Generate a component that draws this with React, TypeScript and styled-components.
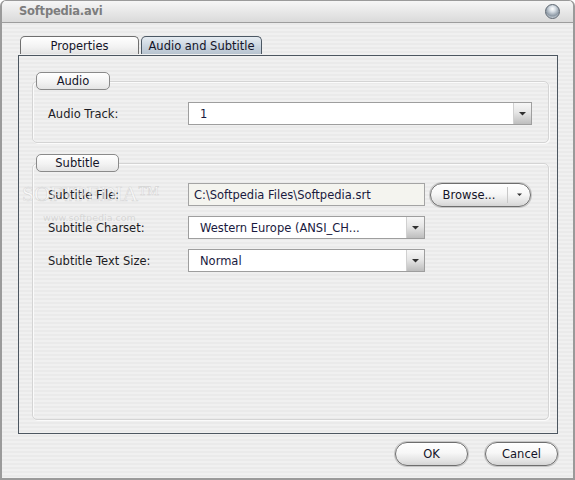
import styled, { createGlobalStyle } from "styled-components";

const GlobalStyle = createGlobalStyle`
  html, body {
    margin: 0;
    padding: 0;
    background: #ffffff;
  }
  body {
    font-family: "DejaVu Sans", "Liberation Sans", sans-serif;
    font-size: 11px;
    color: #1c1c24;
  }
`;

const stripes = `repeating-linear-gradient(
  to bottom,
  #f0f0f0 0px,
  #f0f0f0 2px,
  #eaeaea 2px,
  #eaeaea 4px
)`;

const Window = styled.div`
  box-sizing: border-box;
  width: 575px;
  height: 480px;
  display: flex;
  flex-direction: column;
  border: 2px solid #9a9a9a;
  border-top-width: 1px;
  border-radius: 6px 6px 0 0;
  background: ${stripes};
  overflow: hidden;
`;

const TitleBar = styled.div`
  box-sizing: border-box;
  height: 22px;
  flex: 0 0 22px;
  display: flex;
  align-items: center;
  justify-content: space-between;
  padding: 0 13px 1px 17px;
  background: linear-gradient(to bottom, #f6f6f6, #dadada);
  border-bottom: 1px solid #9d9d9d;
`;

const Title = styled.span`
  font-family: "DejaVu Sans", sans-serif;
  font-weight: bold;
  font-size: 11.5px;
  color: #7d7d7d;
  letter-spacing: -0.2px;
`;

const CloseOrb = styled.span`
  width: 13px;
  height: 13px;
  border-radius: 50%;
  border: 1px solid #5d6670;
  background: radial-gradient(
    circle at 50% 30%,
    #ffffff 0px,
    #d6dde4 3px,
    #8d99a5 7px,
    #c9d1d8 9px
  );
`;

const Body = styled.div`
  flex: 1;
  display: flex;
  flex-direction: column;
  padding: 13px 15px 12px 16px;
  position: relative;
`;

const TabStrip = styled.div`
  display: flex;
  gap: 2px;
  padding-left: 2px;
  height: 18px;
`;

const Tab = styled.div<{ $active?: boolean }>`
  box-sizing: border-box;
  width: ${(p) => (p.$active ? 121 : 119)}px;
  height: 18px;
  display: flex;
  align-items: center;
  justify-content: center;
  font-size: 11.5px;
  border: 1px solid ${(p) => (p.$active ? "#4c5864" : "#6f6f6f")};
  border-bottom: none;
  border-radius: 5px 5px 0 0;
  color: #141428;
  background: ${(p) =>
    p.$active
      ? "linear-gradient(to bottom, #e6ecf2, #c7d2dd 60%, #b7c3cf)"
      : "linear-gradient(to bottom, #ffffff, #f2f2f2 60%, #e2e2e2)"};
`;

const Panel = styled.div`
  box-sizing: border-box;
  flex: 1;
  display: flex;
  flex-direction: column;
  gap: 11px;
  margin-top: 1px;
  padding: 16px 8px 13px 13px;
  border: 1px solid #4c5660;
  background: ${stripes};
`;

const Group = styled.div<{ $grow?: boolean }>`
  display: flex;
  flex-direction: column;
  flex: ${(p) => (p.$grow ? 1 : "0 0 auto")};
`;

const Legend = styled.div<{ $width: number }>`
  box-sizing: border-box;
  position: relative;
  z-index: 1;
  width: ${(p) => p.$width}px;
  height: 18px;
  margin-left: 4px;
  display: flex;
  align-items: center;
  justify-content: center;
  font-size: 11.5px;
  color: #141428;
  border: 1px solid #8a8a8a;
  border-radius: 5px;
  background: linear-gradient(to bottom, #ffffff, #f3f3f3 55%, #e4e4e4);
`;

const Frame = styled.div<{ $top: number; $bottom: number }>`
  flex: 1;
  display: flex;
  flex-direction: column;
  gap: 10px;
  margin-top: -9px;
  padding: ${(p) => p.$top}px 15px ${(p) => p.$bottom}px 15px;
  border: 1px solid #d4d4d4;
  border-radius: 5px;
  box-shadow: inset 1px 1px 0 #fbfbfb, 1px 1px 0 #fbfbfb;
`;

const Row = styled.div`
  display: flex;
  align-items: center;
  height: 23px;
`;

const Label = styled.span`
  width: 140px;
  flex: 0 0 140px;
  font-size: 11.5px;
  color: #1c1c24;
`;

const Combo = styled.div<{ $width: number }>`
  box-sizing: border-box;
  width: ${(p) => p.$width}px;
  height: 23px;
  display: flex;
  border: 1px solid #9e9e9e;
  background: #ffffff;
`;

const ComboValue = styled.span`
  flex: 1;
  display: flex;
  align-items: center;
  padding-left: 11px;
  font-size: 11.5px;
  color: #1a1a40;
  white-space: nowrap;
  overflow: hidden;
`;

const ComboArrow = styled.span`
  width: 17px;
  display: flex;
  align-items: center;
  justify-content: center;
  border-left: 1px solid #d0d0d0;
  background: linear-gradient(to bottom, #f7f7f7, #e6e6e6 45%, #bdbdbd);
`;

const TextField = styled.div`
  box-sizing: border-box;
  width: 237px;
  height: 23px;
  display: flex;
  align-items: center;
  padding-left: 5px;
  font-size: 11.5px;
  color: #1a1a40;
  border: 1px solid #a4a4a4;
  background: #f4f4ef;
  white-space: nowrap;
  overflow: hidden;
`;

const PillButton = styled.div<{ $width: number; $gap?: number }>`
  box-sizing: border-box;
  width: ${(p) => p.$width}px;
  height: 24px;
  margin-left: ${(p) => p.$gap ?? 0}px;
  display: flex;
  align-items: center;
  border: 1px solid #6e6e6e;
  border-radius: 12px;
  box-shadow: 0 0 0 1px #c6c6c6, inset 0 1px 0 #ffffff;
  background: linear-gradient(to bottom, #ffffff, #f7f7f7 45%, #e0e0e0 85%, #d4d4d4);
  font-size: 11.5px;
  color: #141428;
`;

const PillLabel = styled.span`
  flex: 1;
  text-align: center;
`;

const SplitArrow = styled.span`
  width: 22px;
  height: 16px;
  display: flex;
  align-items: center;
  justify-content: center;
  border-left: 1px solid #c8c8c8;
`;

const Footer = styled.div`
  display: flex;
  justify-content: flex-end;
  gap: 17px;
  padding-top: 8px;
`;

const Watermark = styled.div`
  position: absolute;
  left: 20px;
  top: 158px;
  display: flex;
  flex-direction: column;
  pointer-events: none;
`;

const WatermarkLogo = styled.span`
  font-family: "Liberation Serif", "DejaVu Serif", serif;
  font-size: 22px;
  letter-spacing: -0.3px;
  color: rgba(255, 255, 255, 0.6);
  -webkit-text-stroke: 0.6px rgba(150, 150, 150, 0.3);
`;

const WatermarkUrl = styled.span`
  margin-left: 21px;
  margin-top: 5px;
  font-size: 9.5px;
  color: rgba(150, 150, 150, 0.28);
`;

const Triangle = ({ size = 7 }: { size?: number }) => (
  <svg width={size} height={5} viewBox="0 0 7 5">
    <path d="M0 1 H7 L3.5 4.5 Z" fill="#303030" />
  </svg>
);

const Dropdown = ({ width, value }: { width: number; value: string }) => (
  <Combo $width={width}>
    <ComboValue>{value}</ComboValue>
    <ComboArrow>
      <Triangle />
    </ComboArrow>
  </Combo>
);

export default function App() {
  return (
    <>
      <GlobalStyle />
      <Window>
        <TitleBar>
          <Title>Softpedia.avi</Title>
          <CloseOrb />
        </TitleBar>
        <Body>
          <TabStrip>
            <Tab>Properties</Tab>
            <Tab $active>Audio and Subtitle</Tab>
          </TabStrip>
          <Panel>
            <Group>
              <Legend $width={74}>Audio</Legend>
              <Frame $top={20} $bottom={17}>
                <Row>
                  <Label>Audio Track:</Label>
                  <Dropdown width={344} value="1" />
                </Row>
              </Frame>
            </Group>
            <Group $grow>
              <Legend $width={83}>Subtitle</Legend>
              <Frame $top={19} $bottom={16}>
                <Row>
                  <Label>Subtitle File:</Label>
                  <TextField>C:\Softpedia Files\Softpedia.srt</TextField>
                  <PillButton $width={101} $gap={5}>
                    <PillLabel>Browse...</PillLabel>
                    <SplitArrow>
                      <Triangle size={5} />
                    </SplitArrow>
                  </PillButton>
                </Row>
                <Row>
                  <Label>Subtitle Charset:</Label>
                  <Dropdown width={237} value="Western Europe (ANSI_CH..." />
                </Row>
                <Row>
                  <Label>Subtitle Text Size:</Label>
                  <Dropdown width={237} value="Normal" />
                </Row>
              </Frame>
            </Group>
          </Panel>
          <Footer>
            <PillButton $width={73}>
              <PillLabel>OK</PillLabel>
            </PillButton>
            <PillButton $width={73}>
              <PillLabel>Cancel</PillLabel>
            </PillButton>
          </Footer>
          <Watermark>
            <WatermarkLogo>SOFTPEDIA™</WatermarkLogo>
            <WatermarkUrl>www.softpedia.com</WatermarkUrl>
          </Watermark>
        </Body>
      </Window>
    </>
  );
}
